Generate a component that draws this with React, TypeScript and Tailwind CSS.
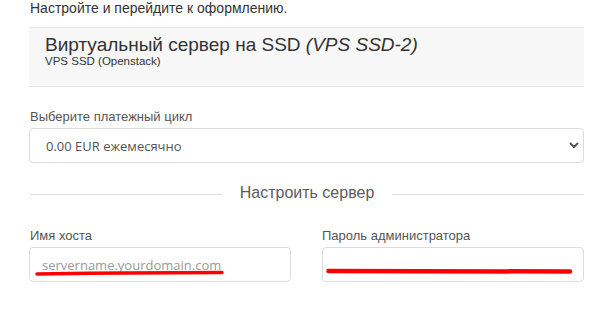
const SANS = "'Liberation Sans', Arial, sans-serif";
const OPEN = "'Open Sans', 'Liberation Sans', sans-serif";

function Chevron() {
  return (
    <svg width="10" height="7" viewBox="0 0 10 7" className="text-[#555]">
      <path d="M1.5 1.5 L5 5 L8.5 1.5" fill="none" stroke="currentColor" strokeWidth="2" strokeLinecap="round" />
    </svg>
  );
}

export default function App() {
  return (
    <div className="h-[309px] w-[614px] overflow-hidden bg-white" style={{ fontFamily: SANS }}>
      <div className="ml-[29px] w-[555px]">
        <p className="pl-px text-[14px] leading-[16px] text-[#333]">Настройте и перейдите к оформлению.</p>

        {/* product header */}
        <div className="mt-[11px] h-[60px] border-y border-[#e6e6e6] bg-[#f7f7f7] pl-[16px] pt-[6px] text-[#333]">
          <div className="text-[19px] leading-[21px]">
            Виртуальный сервер на SSD <em>(VPS SSD-2)</em>
          </div>
          <div className="text-[11.5px] leading-[13px]">VPS SSD (Openstack)</div>
        </div>

        {/* billing cycle */}
        <label className="mt-[21px] mb-[2px] block pl-px text-[13px] leading-[18px] text-[#555]">
          Выберите платежный цикл
        </label>
        <div className="flex h-[35px] items-center justify-between rounded-[4px] border border-[#dcdcdc] pl-[16px] pr-[4px]">
          <span className="text-[13px] leading-[18px] text-[#555]" style={{ fontFamily: OPEN }}>
            0.00 EUR ежемесячно
          </span>
          <Chevron />
        </div>

        {/* divider */}
        <div className="mt-[20px] flex items-center pl-px">
          <div className="mt-[2px] h-px flex-1 bg-[#dddddd]" />
          <span className="px-[18px] text-[16px] leading-[20px] text-[#5c5c5c]">Настроить сервер</span>
          <div className="mt-[2px] h-px flex-1 bg-[#dddddd]" />
        </div>

        {/* fields */}
        <div className="mt-[24px] grid grid-cols-2 gap-x-[31px]">
          <div>
            <label className="mb-[2px] block pl-px text-[13px] leading-[18px] text-[#555]">Имя хоста</label>
            <div className="relative flex h-[35px] items-center rounded-[4px] border border-[#dcdcdc] pl-[12px]">
              <span className="text-[13px] leading-[18px] text-[#999]" style={{ fontFamily: OPEN }}>
                servername.yourdomain.com
              </span>
              <svg className="absolute left-[5px] top-[21px]" width="190" height="8" viewBox="0 0 190 8">
                <path d="M2 5 Q 60 3.8 187 3.5" fill="none" stroke="#ff0000" strokeWidth="3.5" strokeLinecap="round" />
              </svg>
            </div>
          </div>
          <div>
            <label className="mb-[2px] block text-[13px] leading-[18px] text-[#555]">Пароль администратора</label>
            <div className="relative flex h-[35px] items-center rounded-[4px] border border-[#dcdcdc] pl-[11px]">
              <svg className="absolute left-[3px] top-[19px]" width="248" height="8" viewBox="0 0 248 8">
                <path d="M2.5 4 Q 120 3.8 244 4.5" fill="none" stroke="#ff0000" strokeWidth="4.5" strokeLinecap="round" />
              </svg>
            </div>
          </div>
        </div>
      </div>
    </div>
  );
}
